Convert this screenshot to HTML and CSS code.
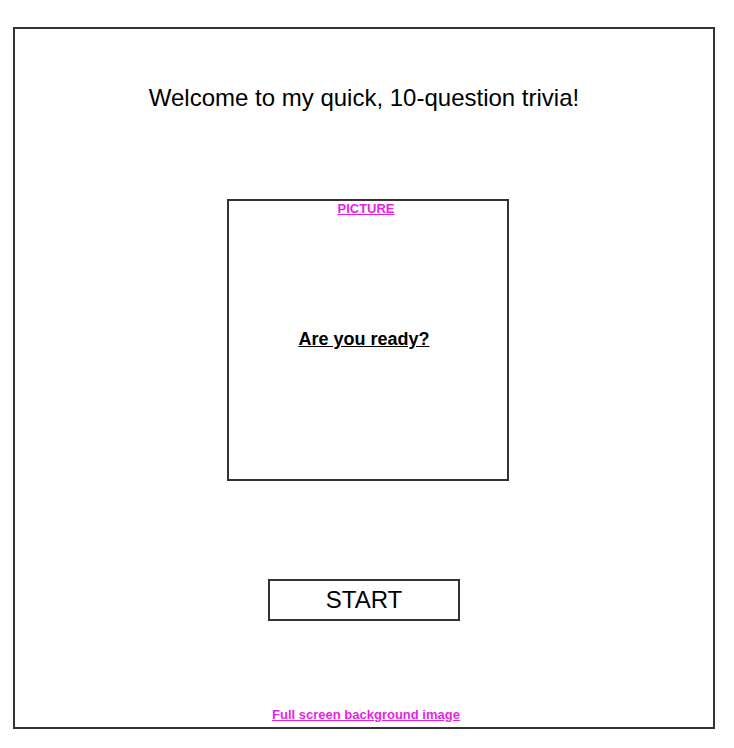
FILE: index.html
```html
<!DOCTYPE html>
<html lang="en">
<head>
<meta charset="utf-8">
<title>Trivia</title>
<link rel="stylesheet" href="styles.css">
</head>
<body>
<main class="frame">
  <h1 class="title">Welcome to my quick, 10-question trivia!</h1>
  <section class="picture">
    <a class="picture-label" href="#">PICTURE</a>
    <a class="ready" href="#">Are you ready?</a>
  </section>
  <button class="start" type="button">START</button>
  <a class="footer-note" href="#">Full screen background image</a>
</main>
</body>
</html>
```
FILE: styles.css
```css
* { box-sizing: border-box; }
html, body { background: #fff; }
body {
  margin: 0;
  padding: 27px 0 0 13px;
  font-family: "Liberation Sans", Arial, sans-serif;
  color: #000;
}
.frame {
  width: 702px;
  height: 702px;
  border: 2px solid #333;
  display: flex;
  flex-direction: column;
  align-items: center;
  padding: 55px 0 5px;
}
.title {
  margin: 0;
  font-size: 24px;
  font-weight: normal;
  line-height: 28px;
}
.picture {
  margin: 87px 0 0 8px;
  width: 282px;
  height: 282px;
  border: 2px solid #333;
  display: grid;
  justify-items: center;
}
.picture > * { grid-area: 1 / 1; }
.picture-label {
  align-self: start;
  font-size: 13px;
  line-height: 15px;
  font-weight: bold;
  color: #e81ee8;
  text-decoration: underline;
  margin-left: -4px;
}
.ready {
  align-self: center;
  font-size: 18px;
  line-height: 22px;
  font-weight: bold;
  color: #000;
  text-decoration: underline;
  margin: 0 0 2px -8px;
}
.start {
  margin-top: 98px;
  width: 192px;
  height: 42px;
  border: 2px solid #333;
  background: #fff;
  font-family: "Liberation Sans", Arial, sans-serif;
  font-size: 24px;
  color: #000;
  padding: 0;
  line-height: 28px;
}
.footer-note {
  margin-top: auto;
  margin-left: 4px;
  font-size: 13px;
  line-height: 15px;
  font-weight: bold;
  color: #e81ee8;
  text-decoration: underline;
}
```
